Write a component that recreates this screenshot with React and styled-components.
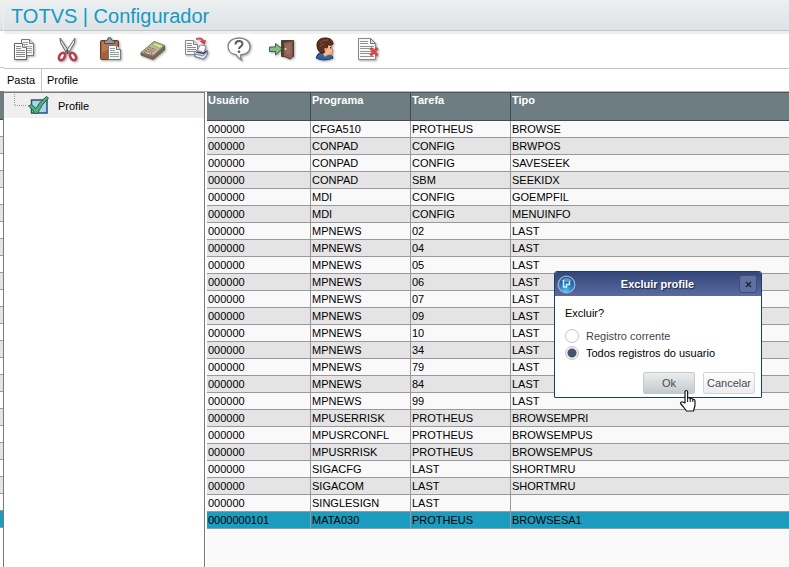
import React, { useState } from "react";
import styled, { createGlobalStyle } from "styled-components";

const GlobalStyle = createGlobalStyle`
* {
  box-sizing: border-box;
}

body {
  margin: 0;
  background: #f9f9f9;
  color: #000;
  font: 11px/16px "Liberation Sans", Arial, sans-serif;
}

button, input {
  font: inherit;
}
`;

const Screen = styled.div`
display: flex;
min-height: 100vh;
`;

const Main = styled.main`
flex: 1;
min-width: 0;
display: flex;
flex-direction: column;
background: #fff;
`;

/* edge of the window that stays behind this one */
const Edge = styled.div`
width: 4px;
flex: none;
display: flex;
flex-direction: column;
background: #fff;
`;

const EdgeTitle = styled.div`
height: 31px;
background: linear-gradient(#efefef, #dfe3e6);
border-right: 1px solid #efefef;
border-bottom: 1px solid #bfc7ca;
`;

const EdgeTools = styled.div`
height: 37px;
border-bottom: 1px solid #bfc4c6;
`;

const EdgeTabs = styled.div`
height: 23px;
`;

const EdgeGrid = styled.div`
flex: 1;
border-right: 1px solid #7b7b7b;
`;

const EdgeHeader = styled.div`
height: 29px;
background: #6e7d81;
border-bottom: 1px solid #444b4d;
`;

const EdgeRow = styled.div`
height: 17px;
background: ${props => props.$selected ? '#1c9dc0' : props.$odd ? '#e4e4e4' : '#fff'};
border-bottom: 1px solid #999;
`;

const TitleBar = styled.header`
height: 34px;
border-top: 3px solid #efefef;
border-bottom: 3px solid #efefef;
background: #bfc7ca;
padding-bottom: 1px;
`;

const Title = styled.h1`
margin: 0;
padding-left: 7px;
height: 27px;
background: linear-gradient(#e9eef1, #dfe3e6);
color: #149ac0;
font-size: 20px;
font-weight: normal;
line-height: 27px;
`;

const Toolbar = styled.div`
height: 35px;
display: flex;
align-items: flex-start;
gap: 15px;
padding: 2px 0 0 6px;
border-bottom: 1px solid #bfc4c6;
`;

const ToolButton = styled.button`
width: 28px;
height: 28px;
padding: 0;
border: 0;
background: none;

svg {
  display: block;
  filter: drop-shadow(1px 1px 1px rgba(0, 0, 0, .35));
}
`;

const Tabs = styled.div`
height: 22px;
display: flex;
`;

const Tab = styled.button`
padding: 0 5px 0 ${props => props.$first ? '3px' : '5px'};
width: ${props => props.$first ? '37px' : 'auto'};
border: 0;
border-left: ${props => props.$first ? '0' : '1px solid #bfc4c6'};
background: #fff;
text-align: left;
white-space: nowrap;
`;

const Panes = styled.div`
flex: 1;
display: flex;
gap: 2px;
border-top: 1px solid #b5b8b9;
`;

const Tree = styled.nav`
width: 201px;
flex: none;
border-top: 1px solid #7b7b7b;
border-right: 1px solid #7b7b7b;
`;

const TreeItem = styled.a`
display: flex;
align-items: center;
height: 25px;
padding-left: 10px;
background: #efefef;
color: #000;
text-decoration: none;

svg {
  flex: none;
}

span {
  padding-left: 6px;
}
`;

const Grid = styled.div`
flex: 1;
min-width: 0;
background: #f9f9f9;
`;

const Table = styled.table`
width: 100%;
table-layout: fixed;
border-collapse: separate;
border-spacing: 0;

th {
  height: 29px;
  padding: 0 1px;
  background: #6e7d81;
  color: #fff;
  font-weight: bold;
  line-height: 14px;
  text-align: left;
  vertical-align: top;
  border-top: 1px solid #4d5557;
  border-bottom: 1px solid #444b4d;
  border-right: 1px solid #444b4d;
}

td {
  height: 17px;
  padding: 0 1px;
  border-right: 1px solid #999;
  border-bottom: 1px solid #999;
  white-space: nowrap;
}

th:last-child, td:last-child {
  border-right: 0;
}
`;

const Col = styled.col`
width: ${props => props.$width || 'auto'};
`;

const Row = styled.tr`
background: ${props => props.$selected ? '#1c9dc0' : props.$odd ? '#e4e4e4' : '#f9f9f9'};
`;

const Dialog = styled.section`
position: fixed;
left: 554px;
top: 271px;
width: 208px;
border: 1px solid #17426b;
border-radius: 3px 3px 1px 1px;
background: #fff;
`;

const DialogTitle = styled.div`
height: 24px;
display: flex;
align-items: center;
padding: 0 4px 0 2px;
border-radius: 2px 2px 0 0;
background: linear-gradient(#344679, #5a6b9f);

h2 {
  flex: 1;
  margin: 0;
  color: #fff;
  font-size: 11px;
  line-height: 16px;
  text-align: center;
  text-shadow: 1px 1px 1px #1b2544;
}
`;

const CloseButton = styled.button`
width: 18px;
height: 18px;
padding: 0;
display: flex;
align-items: center;
justify-content: center;
border: 1px solid #3d4c7d;
border-radius: 3px;
background: #5f6f9f;
`;

const DialogBody = styled.form`
padding: 9px 6px 3px 10px;
`;

const Options = styled.fieldset`
margin: 0;
padding: 0;
border: 0;

legend {
  padding: 0;
  margin-bottom: 6px;
}
`;

const Option = styled.label`
display: flex;
align-items: center;
gap: 7px;
height: 17px;
color: ${props => props.$checked ? '#000' : '#444'};
`;

const Radio = styled.input`
appearance: none;
width: 14px;
height: 14px;
margin: 0;
border: 1px solid #c4c4c4;
border-radius: 50%;
background: #fff;

&:checked {
  background: radial-gradient(circle, #46536b 0 4px, #f2f2f2 5px);
}
`;

const Actions = styled.div`
display: flex;
justify-content: flex-end;
gap: 8px;
padding-top: 11px;
`;

const Button = styled.button`
width: 52px;
height: 22px;
padding: 0;
border: 1px solid ${props => props.$hover ? '#c4caca' : '#d4d4d4'};
border-radius: 2px;
background: ${props => props.$hover ? 'linear-gradient(#eceeee, #c3c9c9)' : 'linear-gradient(#fdfdfd, #ececec)'};
color: #444b55;
`;

const Pointer = styled.svg`
position: fixed;
left: 678px;
top: 389px;
pointer-events: none;
`;

const CopyIcon = () => (
  <svg width="28" height="28" viewBox="0 0 28 28">
    <path d="M11.500 3.500h8l4 4v12h-12z" fill="#f5f5f5" stroke="#777" />
    <path d="M19.500 3.500v4h4" fill="#ddd" stroke="#777" />
    <path d="M13 6.500h5M13 8.500h5M15 10.500h7M15 12.500h7M15 14.500h7M15 16.500h7" stroke="#a0a0a0" />
    <path d="M4.500 7.500h8l4 4v12h-12z" fill="#f8f8f8" stroke="#666" />
    <path d="M12.500 7.500v4h4" fill="#ddd" stroke="#777" />
    <path d="M6 10.500h5M6 12.500h5M6 14.500h9M6 16.500h9M6 18.500h9M6 20.500h9" stroke="#8a8a8a" />
  </svg>
);

const CutIcon = () => (
  <svg width="28" height="28" viewBox="0 0 28 28">
    <path d="M7 2l.5 4.500L14 18l2.500-2z" fill="#dedede" stroke="#666" />
    <path d="M22 2l-.5 4.500L15 18l-2.500-2z" fill="#f0f0f0" stroke="#666" />
    <path d="M13 15l1.500-2 1.500 2-1.500 3z" fill="#555" />
    <ellipse cx="9" cy="20.500" rx="2.600" ry="4" transform="rotate(32 9 20.500)" fill="#fff" stroke="#b3404b" strokeWidth="2.600" />
    <ellipse cx="20" cy="20.500" rx="2.600" ry="4" transform="rotate(-32 20 20.500)" fill="#fff" stroke="#b3404b" strokeWidth="2.600" />
  </svg>
);

const PasteIcon = () => (
  <svg width="28" height="28" viewBox="0 0 28 28">
    <rect x="4.500" y="4.500" width="18" height="19" rx="1" fill="#a0623a" stroke="#6b3d22" />
    <path d="M6 6h15v3L6 17z" fill="#b87850" />
    <path d="M8.500 7.500V5l3-1q0-2.500 2-2.500t2 2.500l3 1v2.500z" fill="#999" stroke="#4d4d4d" />
    <path d="M12.500 9.500h8l4 4v10h-12z" fill="#f5f7f8" stroke="#777" />
    <path d="M20.500 9.500v4h4" fill="#ddd" stroke="#777" />
    <path d="M14 12.500h5M14 14.500h5M14 16.500h9M14 18.500h9M14 20.500h9" stroke="#94a0a8" />
  </svg>
);

const CalculatorIcon = () => (
  <svg width="28" height="28" viewBox="0 0 28 28">
    <path d="M2 16.500L14 20l11.500-10v4L14 23.500 2 19z" fill="#746a5c" stroke="#655b50" />
    <path d="M2 16.500L15 5.500l10.500 4L14 20z" fill="#c4b69c" stroke="#85795f" />
    <path d="M13 8.500l3-2 8 3-3 3z" fill="#c9ea84" stroke="#86996a" strokeWidth=".7" />
    <path d="M6 14.500l7 2.500M8 13l7 2.500M10 11.500l7 2.500" stroke="#7e705f" strokeWidth="1.200" strokeDasharray="2 1" />
    <path d="M5 16l1.500.5M12 18l1.500.5" stroke="#c86045" strokeWidth="1.500" />
  </svg>
);

const PrintIcon = () => (
  <svg width="28" height="28" viewBox="0 0 28 28">
    <path d="M3.500 4.500h8l4 4v10h-12z" fill="#f8f8f8" stroke="#888" />
    <path d="M11.500 4.500v4h4" fill="#ddd" stroke="#888" />
    <path d="M5 7.500h5M5 9.500h5M5 11.500h9M5 13.500h9M5 15.500h9" stroke="#8b8b8b" />
    <path d="M12.500 16.500l4-4 9 2v4l-4 4.500-9-2.500z" fill="#ccd5e8" stroke="#7c849b" />
    <path d="M15.500 14.500l2.500-5.500 6 1-2 6.500z" fill="#fff" stroke="#8b91a3" />
    <path d="M14.500 16l7 1.500 3-2.500" fill="none" stroke="#3f475d" strokeWidth="1.500" />
    <path d="M13 18l8 2 4-4v2.500l-3.500 4.500-8.500-2.500z" fill="#eef1f8" stroke="#7c849b" />
    <path d="M14 3q6-2 7.500 3" fill="none" stroke="#d0555a" strokeWidth="2" />
    <path d="M17.500 5l6.500-1-1.500 5z" fill="#d8434a" />
  </svg>
);

const HelpIcon = () => (
  <svg width="28" height="28" viewBox="0 0 28 28">
    <path d="M14 2C7.500 2 3 5.500 3 10.500c0 4.500 3.500 7.500 8 8.200 1.500 2.500 3 4 5.500 5.300-1-2-1.300-3.500-1-5C21 18.500 25 15.500 25 10.500 25 5.500 20.500 2 14 2z" fill="#fff" stroke="#7f858a" strokeWidth="1.300" />
    <path d="M10.500 8.500c0-4.500 7-4.500 7-.7 0 3-3.500 2.500-3.500 5.200" fill="none" stroke="#545f69" strokeWidth="2" />
    <circle cx="14" cy="15.800" r="1.300" fill="#545f69" />
  </svg>
);

const ExitIcon = () => (
  <svg width="28" height="28" viewBox="0 0 28 28">
    <path d="M13.500 4.500h12v16h-12z" fill="#52443c" stroke="#4a3d36" />
    <path d="M15.500 6.500L25 4.500v16l-3 2.500-6.500-3z" fill="#8b6250" stroke="#563c30" />
    <path d="M17.500 8.500l5-1.500v12l-5-2z" fill="#986e5b" />
    <circle cx="17.500" cy="13" r="1" fill="#e9d5b5" />
    <path d="M1.500 11h6V7.500L14 13l-6.500 6v-3.500h-6z" fill="#82bd83" stroke="#35643a" />
  </svg>
);

const UserIcon = () => (
  <svg width="28" height="28" viewBox="0 0 28 28">
    <path d="M5 22q1-5 6-6l6 2q5 1 5 4-9 4-17 0z" fill="#2e62a8" stroke="#193d75" />
    <path d="M12 8h8l1 5 1 2-1 1v3h-4l-3 2-3-4z" fill="#f3b78f" stroke="#b77046" strokeWidth=".7" />
    <path d="M6.500 12C4.500 5 9 2 14 2s8 2 8 6c-2 2-4 1-5 .5l-1 3.500-2 1-1 4q-5 1-6.500-5z" fill="#5c3020" stroke="#3d1c10" />
    <path d="M9 7q3-4 8-3M9 11q1-3 4-3" fill="none" stroke="#8b5136" />
    <path d="M14.500 12v3" stroke="#e6a179" strokeWidth="2" />
    <path d="M19.500 11v1.500" stroke="#333" />
  </svg>
);

const DeleteIcon = () => (
  <svg width="28" height="28" viewBox="0 0 28 28">
    <path d="M4.500 2.500h12l5 5v16h-17z" fill="#f8f8f8" stroke="#888" />
    <path d="M16.500 2.500v5h5z" fill="#ddd" stroke="#777" />
    <path d="M6 5.500h8M6 7.500h8M6 10.500h14M6 12.500h14M6 15.500h14M6 17.500h14M6 20.500h14" stroke="#939393" />
    <path d="M16.500 12l7 7.500M23.500 12l-7 7.500" stroke="#d04a4a" strokeWidth="3" />
  </svg>
);

const CheckIcon = () => (
  <svg width="38" height="25" viewBox="0 0 38 25">
    <path d="M.5 1v11.500H12" fill="none" stroke="#999" strokeDasharray="1 1" />
    <rect x="17.500" y="7" width="15.500" height="13" fill="#a9d3ed" stroke="#2b4f77" strokeWidth="1.500" />
    <path d="M14.500 13l3-1.500 4.500 4Q26 8 32.500 3.500L34.500 5Q27 12 23.500 20.500H21q-2-4.500-6.500-7.500z" fill="#4fb17a" stroke="#226142" />
  </svg>
);

const LogoIcon = () => (
  <svg width="19" height="19" viewBox="0 0 19 19">
    <defs>
      <radialGradient id="ball" cx=".45" cy=".9" r=".9">
        <stop offset="0" stopColor="#5cc4f2" />
        <stop offset=".5" stopColor="#1f7cc0" />
        <stop offset="1" stopColor="#1b4a85" />
      </radialGradient>
    </defs>
    <circle cx="9.500" cy="9.500" r="8.300" fill="url(#ball)" stroke="#9fb3cc" strokeWidth="1.300" />
    <path d="M4 5.500Q9.500 0 15 5.500 9.500 8 4 5.500z" fill="#a9cfea" opacity=".5" />
    <path d="M6.500 5v7h3V9.500h3V6" fill="none" stroke="#d5effc" strokeWidth="1.400" />
  </svg>
);

const tools = [
  ["Copiar", CopyIcon],
  ["Recortar", CutIcon],
  ["Colar", PasteIcon],
  ["Calculadora", CalculatorIcon],
  ["Imprimir", PrintIcon],
  ["Ajuda", HelpIcon],
  ["Sair", ExitIcon],
  ["Usuário", UserIcon],
  ["Excluir", DeleteIcon]
];

const rows = [
  ["000000", "CFGA510", "PROTHEUS", "BROWSE"],
  ["000000", "CONPAD", "CONFIG", "BRWPOS"],
  ["000000", "CONPAD", "CONFIG", "SAVESEEK"],
  ["000000", "CONPAD", "SBM", "SEEKIDX"],
  ["000000", "MDI", "CONFIG", "GOEMPFIL"],
  ["000000", "MDI", "CONFIG", "MENUINFO"],
  ["000000", "MPNEWS", "02", "LAST"],
  ["000000", "MPNEWS", "04", "LAST"],
  ["000000", "MPNEWS", "05", "LAST"],
  ["000000", "MPNEWS", "06", "LAST"],
  ["000000", "MPNEWS", "07", "LAST"],
  ["000000", "MPNEWS", "09", "LAST"],
  ["000000", "MPNEWS", "10", "LAST"],
  ["000000", "MPNEWS", "34", "LAST"],
  ["000000", "MPNEWS", "79", "LAST"],
  ["000000", "MPNEWS", "84", "LAST"],
  ["000000", "MPNEWS", "99", "LAST"],
  ["000000", "MPUSERRISK", "PROTHEUS", "BROWSEMPRI"],
  ["000000", "MPUSRCONFL", "PROTHEUS", "BROWSEMPUS"],
  ["000000", "MPUSRRISK", "PROTHEUS", "BROWSEMPUS"],
  ["000000", "SIGACFG", "LAST", "SHORTMRU"],
  ["000000", "SIGACOM", "LAST", "SHORTMRU"],
  ["000000", "SINGLESIGN", "LAST", ""],
  ["0000000101", "MATA030", "PROTHEUS", "BROWSESA1"]
];

const options = ["Registro corrente", "Todos registros do usuario"];

const DeleteDialog = () => {
  const [choice, setChoice] = useState(options[1]);

  return (
    <Dialog role="dialog" aria-labelledby="dialog-title">
      <DialogTitle>
        <LogoIcon />
        <h2 id="dialog-title">Excluir profile</h2>
        <CloseButton type="button" aria-label="Fechar">
          <svg width="7" height="7" viewBox="0 0 7 7">
            <path d="M1 1l5 5M6 1L1 6" stroke="#1d2743" strokeWidth="1.600" />
          </svg>
        </CloseButton>
      </DialogTitle>
      <DialogBody>
        <Options>
          <legend>Excluir?</legend>
          {options.map(option => (
            <Option key={option} $checked={choice === option}>
              <Radio
                type="radio"
                name="scope"
                checked={choice === option}
                onChange={() => setChoice(option)}
              />
              {option}
            </Option>
          ))}
        </Options>
        <Actions>
          <Button type="button" $hover>Ok</Button>
          <Button type="button">Cancelar</Button>
        </Actions>
      </DialogBody>
    </Dialog>
  );
};

const App = () => {
  const last = rows.length - 1;

  return (
    <Screen>
      <GlobalStyle />
      <Edge aria-hidden="true">
        <EdgeTitle />
        <EdgeTools />
        <EdgeTabs />
        <EdgeGrid>
          <EdgeHeader />
          {rows.map((row, i) => (
            <EdgeRow key={i} $odd={i % 2 === 1} $selected={i === last} />
          ))}
        </EdgeGrid>
      </Edge>
      <Main>
        <TitleBar>
          <Title>TOTVS | Configurador</Title>
        </TitleBar>
        <Toolbar>
          {tools.map(([label, Icon]) => (
            <ToolButton key={label} type="button" aria-label={label}>
              <Icon />
            </ToolButton>
          ))}
        </Toolbar>
        <Tabs>
          <Tab type="button" $first>Pasta</Tab>
          <Tab type="button">Profile</Tab>
        </Tabs>
        <Panes>
          <Tree>
            <TreeItem href="#profile">
              <CheckIcon />
              <span>Profile</span>
            </TreeItem>
          </Tree>
          <Grid>
            <Table>
              <colgroup>
                <Col $width="104px" />
                <Col $width="100px" />
                <Col $width="100px" />
                <Col />
              </colgroup>
              <thead>
                <tr>
                  <th>Usuário</th>
                  <th>Programa</th>
                  <th>Tarefa</th>
                  <th>Tipo</th>
                </tr>
              </thead>
              <tbody>
                {rows.map((row, i) => (
                  <Row key={i} $odd={i % 2 === 1} $selected={i === last}>
                    {row.map((cell, c) => <td key={c}>{cell}</td>)}
                  </Row>
                ))}
              </tbody>
            </Table>
          </Grid>
        </Panes>
      </Main>
      <DeleteDialog />
      <Pointer width="20" height="24" viewBox="0 0 20 24">
        <path d="M7 14V3q0-1.500 1.300-1.500T9.600 3v6q2-1 2.600.7 2-.8 2.600.9 2.200-.6 2.200 1.600v4.300L15.500 22h-7l-3-4-3-3.500q0-2 2-1.500z" fill="#fff" stroke="#16161d" strokeWidth="1.200" strokeLinejoin="round" />
        <path d="M9.600 9v4M12.200 9.700V13M14.800 10.600V13" stroke="#16161d" />
      </Pointer>
    </Screen>
  );
};

export default App;
